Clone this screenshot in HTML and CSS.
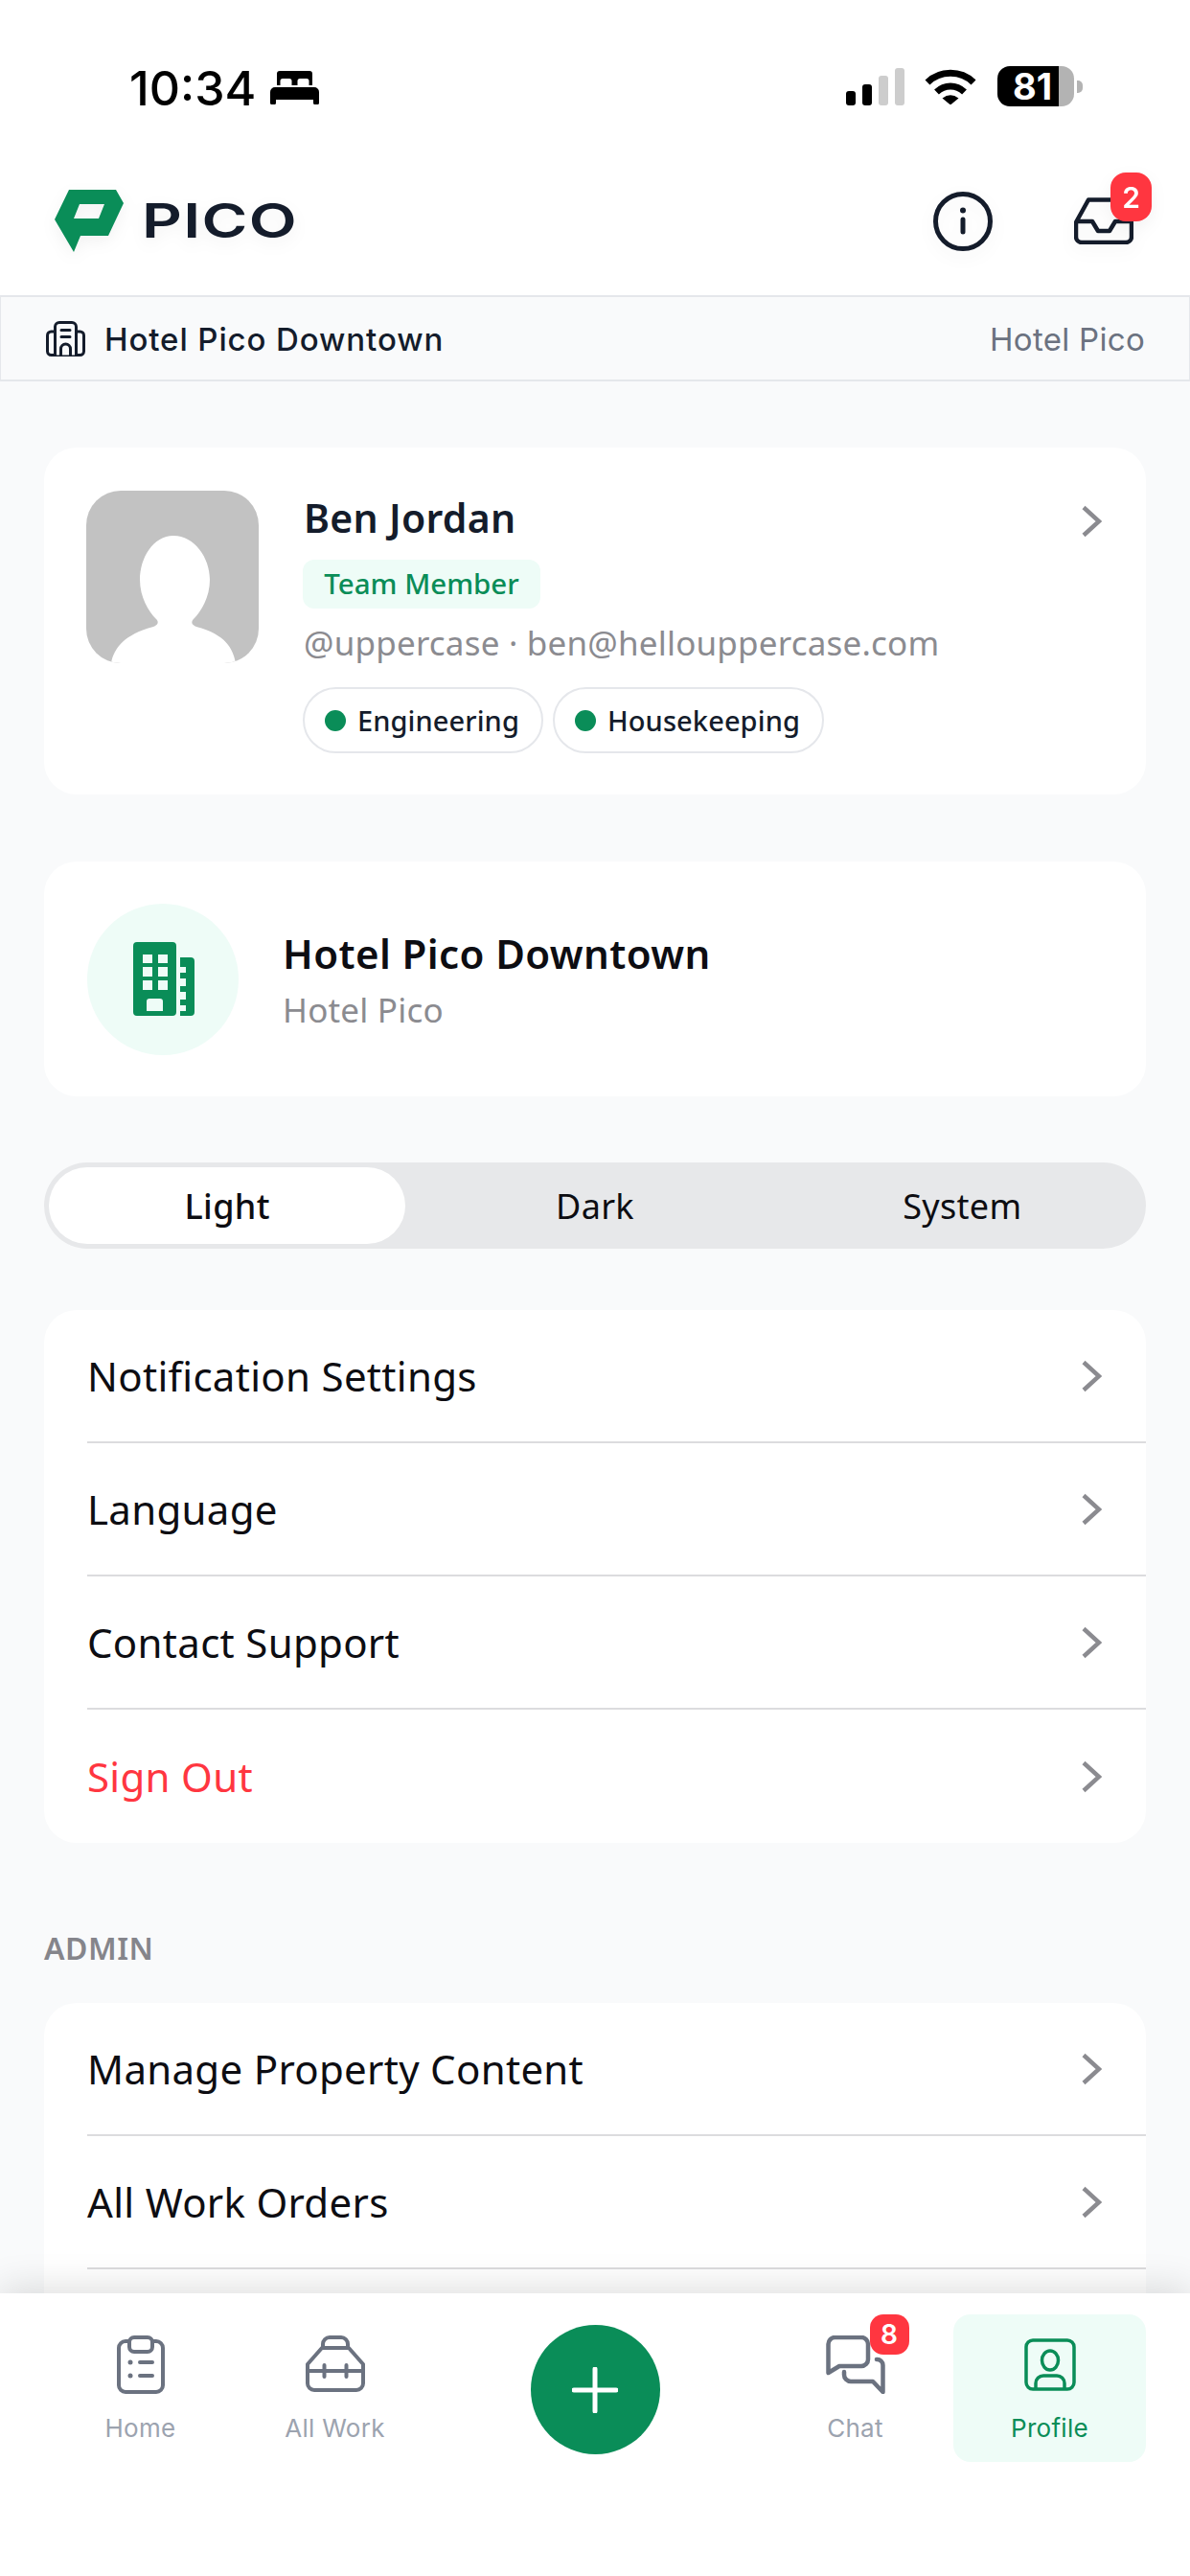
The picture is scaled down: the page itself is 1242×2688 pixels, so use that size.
FILE: index.html
```html
<!DOCTYPE html>
<html lang="en">
<head>
<meta charset="utf-8">
<title>Pico Profile</title>
<link rel="stylesheet" href="styles.css">
</head>
<body>
<div class="app">
  <div class="status">
    <div class="status-left">
      <span class="time">10:34</span>
      <svg class="bed" viewBox="0 0 51 35"><path d="M7 3a3 3 0 0 1 3-3h31a3 3 0 0 1 3 3v12h-3.500v-4.500a2.500 2.500 0 0 0-2.500-2.500h-7a2.500 2.500 0 0 0-2.500 2.500v4.500h-6v-4.500a2.500 2.500 0 0 0-2.500-2.500h-7a2.500 2.500 0 0 0-2.500 2.500v4.500H7zM5 17h41a5 5 0 0 1 5 5v11.500a1.500 1.500 0 0 1-1.500 1.500h-3a1.500 1.500 0 0 1-1.500-1.500V30H6v3.500A1.500 1.500 0 0 1 4.500 35h-3A1.500 1.500 0 0 1 0 33.500V22a5 5 0 0 1 5-5z"/></svg>
    </div>
    <div class="status-right">
      <div class="signal">
        <span class="bar b1"></span><span class="bar b2"></span><span class="bar b3 off"></span><span class="bar b4 off"></span>
      </div>
      <svg class="wifi" viewBox="0 0 54 38"><path d="M3 15C16 2 38 2 51 15" fill="none" stroke="#000" stroke-width="7"/><path d="M12.500 25C21 17 33 17 41.500 25" fill="none" stroke="#000" stroke-width="7"/><path d="M18.500 31.500Q27 25 35.500 31.500L27 38.500z"/></svg>
      <div class="battery"><span class="battery-body">81</span><span class="battery-cap"></span></div>
    </div>
  </div>

  <header class="topbar">
    <div class="logo">
      <svg class="logo-mark" viewBox="0 0 72 65"><path fill-rule="evenodd" fill="#0a8d58" d="M15 0H64L72 14L56 48H27L20 65L0 31zM26 15L20 30H46L52 15z"/></svg>
      <span class="logo-word">PICO</span>
    </div>
    <div class="top-actions">
      <svg class="info" viewBox="0 0 62 62"><circle cx="31" cy="31" r="28.500" fill="none" stroke="#141c2b" stroke-width="5"/><circle cx="31" cy="19.500" r="3" fill="#141c2b"/><path d="M31 29V42" stroke="#141c2b" stroke-width="5" stroke-linecap="round"/></svg>
      <div class="inbox">
        <svg class="inbox-icon" viewBox="0 0 62 49"><path fill="none" stroke="#141c2b" stroke-width="4.500" stroke-linejoin="round" d="M15 2.500H47L60 26V41a6 6 0 0 1-6 6H8a6 6 0 0 1-6-6V26zM2 25H19L25 35H37L43 25H60"/></svg>
        <span class="badge badge-inbox">2</span>
      </div>
    </div>
  </header>

  <div class="property-bar">
    <div class="property-name">
      <svg class="property-icon" viewBox="0 0 41 37"><g fill="none" stroke="#141c2b" stroke-width="3" stroke-linejoin="round" stroke-linecap="round"><rect x="1.500" y="11" width="38" height="24.500" rx="4"/><path d="M9.500 35.500V6a4.500 4.500 0 0 1 4.500-4.500H27A4.500 4.500 0 0 1 31.500 6V35.500" fill="#f9fafb"/><path d="M16 9.500H25M16 16.500H25M15.500 35.500V29a5 5 0 0 1 10 0V35.500"/></g></svg>
      <span>Hotel Pico Downtown</span>
    </div>
    <span class="property-org">Hotel Pico</span>
  </div>

  <main class="content">
    <section class="card user-card">
      <svg class="avatar" viewBox="0 0 180 180"><rect width="180" height="180" fill="#c2c2c2"/><path fill="#fff" d="M91 47c22 0 38 23 38 46 0 18-9 33-17 41-3 3-2 6 3 8 30 8 38 22 41 38H26c3-16 14-30 44-38 5-2 6-5 3-8-8-8-17-23-17-41 0-23 14-46 35-46z"/></svg>
      <div class="user-info">
        <div class="user-name">Ben Jordan</div>
        <span class="role-tag">Team Member</span>
        <div class="user-meta">@uppercase · ben@hellouppercase.com</div>
        <div class="chips">
          <span class="chip"><i class="dot"></i>Engineering</span>
          <span class="chip"><i class="dot"></i>Housekeeping</span>
        </div>
      </div>
      <svg class="chevron chevron-top" viewBox="0 0 22 34"><path d="M3 2.500L19 17L3 31.500" fill="none" stroke="#8b8b90" stroke-width="4.500"/></svg>
    </section>

    <section class="card org-card">
      <div class="org-circle">
        <svg class="org-icon" viewBox="0 0 64 77"><path fill="#0a8d58" fill-rule="evenodd" d="M4 0H41a4 4 0 0 1 4 4V73a4 4 0 0 1-4 4H4a4 4 0 0 1-4-4V4a4 4 0 0 1 4-4zM10 13v9h10v-9zM26 13v9h10v-9zM10 26v10h10V26zM26 26v10h10V26zM10 40v10h10V40zM26 40v10h10V40zM14 72H31V62a3 3 0 0 0-3-3H17a3 3 0 0 0-3 3z"/><path fill="#0a8d58" d="M49 16H60a4 4 0 0 1 4 4V73a4 4 0 0 1-4 4H49V72H55V66H49V60H55V52H49V46H55V38H49V32H55V26H49z"/></svg>
      </div>
      <div class="org-text">
        <div class="org-title">Hotel Pico Downtown</div>
        <div class="org-sub">Hotel Pico</div>
      </div>
    </section>

    <div class="segment">
      <span class="seg-item selected"><span>Light</span></span>
      <span class="seg-item"><span>Dark</span></span>
      <span class="seg-item"><span>System</span></span>
    </div>

    <section class="card list">
      <div class="row"><span>Notification Settings</span><svg class="chevron" viewBox="0 0 22 34"><path d="M3 2.500L19 17L3 31.500" fill="none" stroke="#8b8b90" stroke-width="4.500"/></svg></div>
      <div class="row"><span>Language</span><svg class="chevron" viewBox="0 0 22 34"><path d="M3 2.500L19 17L3 31.500" fill="none" stroke="#8b8b90" stroke-width="4.500"/></svg></div>
      <div class="row"><span>Contact Support</span><svg class="chevron" viewBox="0 0 22 34"><path d="M3 2.500L19 17L3 31.500" fill="none" stroke="#8b8b90" stroke-width="4.500"/></svg></div>
      <div class="row row-danger"><span>Sign Out</span><svg class="chevron" viewBox="0 0 22 34"><path d="M3 2.500L19 17L3 31.500" fill="none" stroke="#8b8b90" stroke-width="4.500"/></svg></div>
    </section>

    <h2 class="section-title">ADMIN</h2>

    <section class="card list">
      <div class="row"><span>Manage Property Content</span><svg class="chevron" viewBox="0 0 22 34"><path d="M3 2.500L19 17L3 31.500" fill="none" stroke="#8b8b90" stroke-width="4.500"/></svg></div>
      <div class="row"><span>All Work Orders</span><svg class="chevron" viewBox="0 0 22 34"><path d="M3 2.500L19 17L3 31.500" fill="none" stroke="#8b8b90" stroke-width="4.500"/></svg></div>
      <div class="row"></div>
    </section>
  </main>

  <nav class="tabbar">
    <div class="tab">
      <svg class="tab-icon" width="50" height="61" viewBox="0 0 50 61"><g fill="none" stroke="#6b7280" stroke-width="4" stroke-linecap="round"><path d="M13 6H9a7 7 0 0 0-7 7V52a7 7 0 0 0 7 7H41a7 7 0 0 0 7-7V13a7 7 0 0 0-7-7H37"/><rect x="13" y="2" width="24" height="15" rx="5"/><path d="M24 28H37M24 42H37"/></g><circle cx="14" cy="28" r="2.500" fill="#6b7280"/><circle cx="14" cy="42" r="2.500" fill="#6b7280"/></svg>
      <span class="tab-label">Home</span>
    </div>
    <div class="tab">
      <svg class="tab-icon" width="62" height="61" viewBox="0 0 62 61"><g fill="none" stroke="#6b7280" stroke-width="4" stroke-linecap="round" stroke-linejoin="round"><path d="M18 13V9a7 7 0 0 1 7-7H37a7 7 0 0 1 7 7V13"/><path d="M17 13H45L60 30V50a7 7 0 0 1-7 7H9a7 7 0 0 1-7-7V30z"/><path d="M2 37H60M19.500 31V43M42.500 31V43"/></g></svg>
      <span class="tab-label">All Work</span>
    </div>
    <div class="fab-slot">
      <div class="fab"><svg class="plus" viewBox="0 0 48 48"><path d="M24 2V46M2 24H46" stroke="#fff" stroke-width="5" stroke-linecap="round"/></svg></div>
    </div>
    <div class="tab">
      <div class="chat-wrap">
        <svg class="tab-icon" width="62" height="61" viewBox="0 0 62 61"><g fill="none" stroke="#6b7280" stroke-width="4.500" stroke-linecap="round" stroke-linejoin="round"><path d="M2.500 39V9A7 7 0 0 1 9.500 2H37A7 7 0 0 1 44 9V25A7 7 0 0 1 37 32H14z"/><path d="M53 25A6 6 0 0 1 59.500 31V59L49 48H26A7 7 0 0 1 19 41V38"/></g></svg>
        <span class="badge badge-chat">8</span>
      </div>
      <span class="tab-label">Chat</span>
    </div>
    <div class="tab tab-active">
      <svg class="tab-icon" width="54" height="61" viewBox="0 0 54 61"><g fill="none" stroke="#0a8d58" stroke-width="3.500"><rect x="2" y="5" width="50" height="51" rx="7"/><ellipse cx="27" cy="26" rx="8.500" ry="10"/><path d="M12 56V50A8 8 0 0 1 20 42H34A8 8 0 0 1 42 50V56"/></g></svg>
      <span class="tab-label">Profile</span>
    </div>
  </nav>
</div>
</body>
</html>
```

FILE: styles.css
```css
* { box-sizing: border-box; }
html, body { margin: 0; padding: 0; }
body { background: #f9fafb; color: #141c2b; font-family: "Noto Sans", "Liberation Sans", sans-serif; }
.app { width: 1242px; height: 2688px; display: flex; flex-direction: column; overflow: hidden; background: #f9fafb; }

.status { height: 160px; flex: none; background: #fff; display: flex; justify-content: space-between; padding: 69px 112px 0 135px; }
.status-left { display: flex; align-items: flex-start; gap: 15px; }
.time { font-family: Inter, sans-serif; font-size: 50px; line-height: 46px; font-weight: 500; color: #000; }
.bed { width: 51px; height: 35px; margin-top: 5px; }
.status-right { display: flex; align-items: flex-start; }
.signal { display: flex; align-items: flex-end; gap: 7px; height: 39px; margin-top: 2px; }
.bar { width: 10px; background: #000; border-radius: 3px; }
.bar.off { background: #cdcdcd; }
.b1 { height: 15px; }
.b2 { height: 22px; }
.b3 { height: 31px; }
.b4 { height: 39px; }
.wifi { width: 54px; height: 38px; margin: 2px 22px 0 21px; }
.battery { display: flex; align-items: center; }
.battery-body { width: 80px; height: 42px; border-radius: 13px; background: linear-gradient(90deg, #000 80%, #b3b3b3 80%); color: #fff; font-family: Inter, sans-serif; font-weight: 700; font-size: 38px; line-height: 42px; padding-left: 16px; }
.battery-cap { width: 6px; height: 13px; margin-left: 3px; background: #b3b3b3; border-radius: 0 5px 5px 0; }

.topbar { height: 148px; flex: none; background: #fff; display: flex; justify-content: space-between; padding: 38px 59px 0 57px; }
.logo { display: flex; align-items: flex-start; gap: 19px; filter: drop-shadow(0 6px 8px rgba(0,0,0,.05)); }
.logo-mark { width: 72px; height: 65px; }
.logo-word { font-family: Inter, sans-serif; font-weight: 600; font-size: 50px; line-height: 36px; margin-top: 14px; letter-spacing: 1px; color: #141c2b; transform: scaleX(1.3); transform-origin: left center; }
.top-actions { display: flex; align-items: flex-start; gap: 85px; filter: drop-shadow(0 6px 8px rgba(0,0,0,.05)); }
.info { width: 62px; height: 62px; margin-top: 2px; }
.inbox { position: relative; width: 62px; height: 49px; margin-top: 8px; }
.inbox-icon { width: 62px; height: 49px; display: block; }
.badge { position: absolute; background: #ff3640; color: #fff; font-family: Inter, sans-serif; font-weight: 600; display: flex; align-items: center; justify-content: center; }
.badge-inbox { left: 38px; top: -26px; width: 43px; height: 51px; border-radius: 16px; font-size: 30px; }

.property-bar { height: 90px; flex: none; display: flex; align-items: center; justify-content: space-between; background: #f9fafb; border: 2px solid #e5e7eb; border-width: 2px 1px; padding: 2px 46px 0 47px; }
.property-name { display: flex; align-items: center; gap: 20px; font-family: Inter, sans-serif; font-size: 33px; letter-spacing: 0.9px; font-weight: 500; color: #141c2b; }
.property-icon { width: 41px; height: 37px; margin-top: -2px; }
.property-org { font-family: Inter, sans-serif; font-size: 33px; letter-spacing: 0.3px; color: #6b7280; }

.content { flex: 1; min-height: 0; overflow: hidden; padding: 69px 46px 0; }
.card { background: #fff; border-radius: 34px; }

.user-card { height: 362px; display: flex; align-items: flex-start; padding: 45px 46px 0 44px; margin-bottom: 70px; }
.avatar { width: 180px; height: 180px; border-radius: 36px; flex: none; }
.user-info { flex: 1; margin-left: 46px; display: flex; flex-direction: column; align-items: flex-start; }
.user-name { font-size: 41px; line-height: 50px; letter-spacing: 0.3px; font-weight: 600; color: #141c2b; margin-top: 3px; margin-left: 1px; }
.role-tag { margin-top: 19px; height: 51px; width: 248px; background: #eefcf7; color: #0a8d58; border-radius: 12px; font-size: 29.500px; line-height: 50px; text-align: center; font-weight: 500; }
.user-meta { margin-top: 12px; font-size: 35px; line-height: 48px; letter-spacing: 0.2px; color: #8b8b90; margin-left: 1px; }
.chips { display: flex; gap: 10px; margin-top: 22px; }
.chip { height: 69px; display: flex; align-items: center; padding: 0 23px 0 21px; border: 2px solid #e5e7eb; border-radius: 35px; font-size: 29px; letter-spacing: 0.1px; font-weight: 500; color: #141c2b; }
.dot { width: 22px; height: 22px; border-radius: 50%; background: #0a8d58; margin-right: 12px; }
.chevron { width: 22px; height: 34px; flex: none; }
.chevron-top { margin-top: 15px; }

.org-card { height: 245px; display: flex; align-items: center; padding: 0 45px; gap: 46px; margin-bottom: 69px; }
.org-circle { width: 158px; height: 158px; border-radius: 50%; background: #eefcf7; display: flex; align-items: center; justify-content: center; flex: none; }
.org-icon { width: 64px; height: 77px; margin-left: 1px; }
.org-text { padding-top: 3px; }
.org-title { font-size: 42px; line-height: 54px; letter-spacing: 0.4px; font-weight: 600; color: #0d0d12; }
.org-sub { font-size: 35px; line-height: 48px; color: #8b8b90; margin-top: 8px; letter-spacing: 0.2px; }

.segment { height: 90px; display: grid; grid-template-columns: repeat(3, 1fr); background: #e7e8ea; border-radius: 45px; padding: 5px 0; margin-bottom: 64px; }
.seg-item { display: flex; align-items: center; justify-content: center; font-size: 36px; letter-spacing: 0.3px; color: #0d0d12; border-radius: 40px; }
.seg-item.selected { background: #fff; font-weight: 500; margin: 0 6px 0 5px; }

.row { height: 139px; margin-left: 45px; padding-right: 46px; display: flex; align-items: center; justify-content: space-between; border-bottom: 2px solid #dcdcde; font-size: 42px; letter-spacing: 0.3px; color: #0d0d12; }
.row:last-child { border-bottom: 0; }
.row-danger { color: #ff3640; }
.list { margin-bottom: 0; }

.section-title { margin: 90px 0 37px; font-size: 32px; line-height: 40px; font-weight: 600; color: #85858b; letter-spacing: 0.5px; }

.tabbar { position: relative; z-index: 2; height: 295px; flex: none; background: #fff; box-shadow: 0 -6px 36px rgba(0,0,0,.13); display: grid; grid-template-columns: 201px 201px 1fr 201px 201px; gap: 2px; padding: 22px 46px 0; align-items: start; }
.tab { height: 154px; display: flex; flex-direction: column; align-items: center; padding-top: 22px; border-radius: 18px; }
.tab-icon { display: block; }
.tab-label { font-family: Inter, sans-serif; font-size: 26px; line-height: 32px; color: #9ca3af; margin-top: 20px; letter-spacing: 0.3px; }
.tab-active { background: #eefcf7; }
.tab-active .tab-label { color: #0a8d58; }
.chat-wrap { position: relative; }
.badge-chat { left: 46px; top: -22px; width: 41px; height: 42px; border-radius: 14px; font-size: 28px; }
.fab-slot { display: flex; justify-content: center; padding-top: 11px; }
.fab { width: 135px; height: 135px; border-radius: 50%; background: #0a8d58; display: flex; align-items: center; justify-content: center; }
.plus { width: 48px; height: 48px; }
```
